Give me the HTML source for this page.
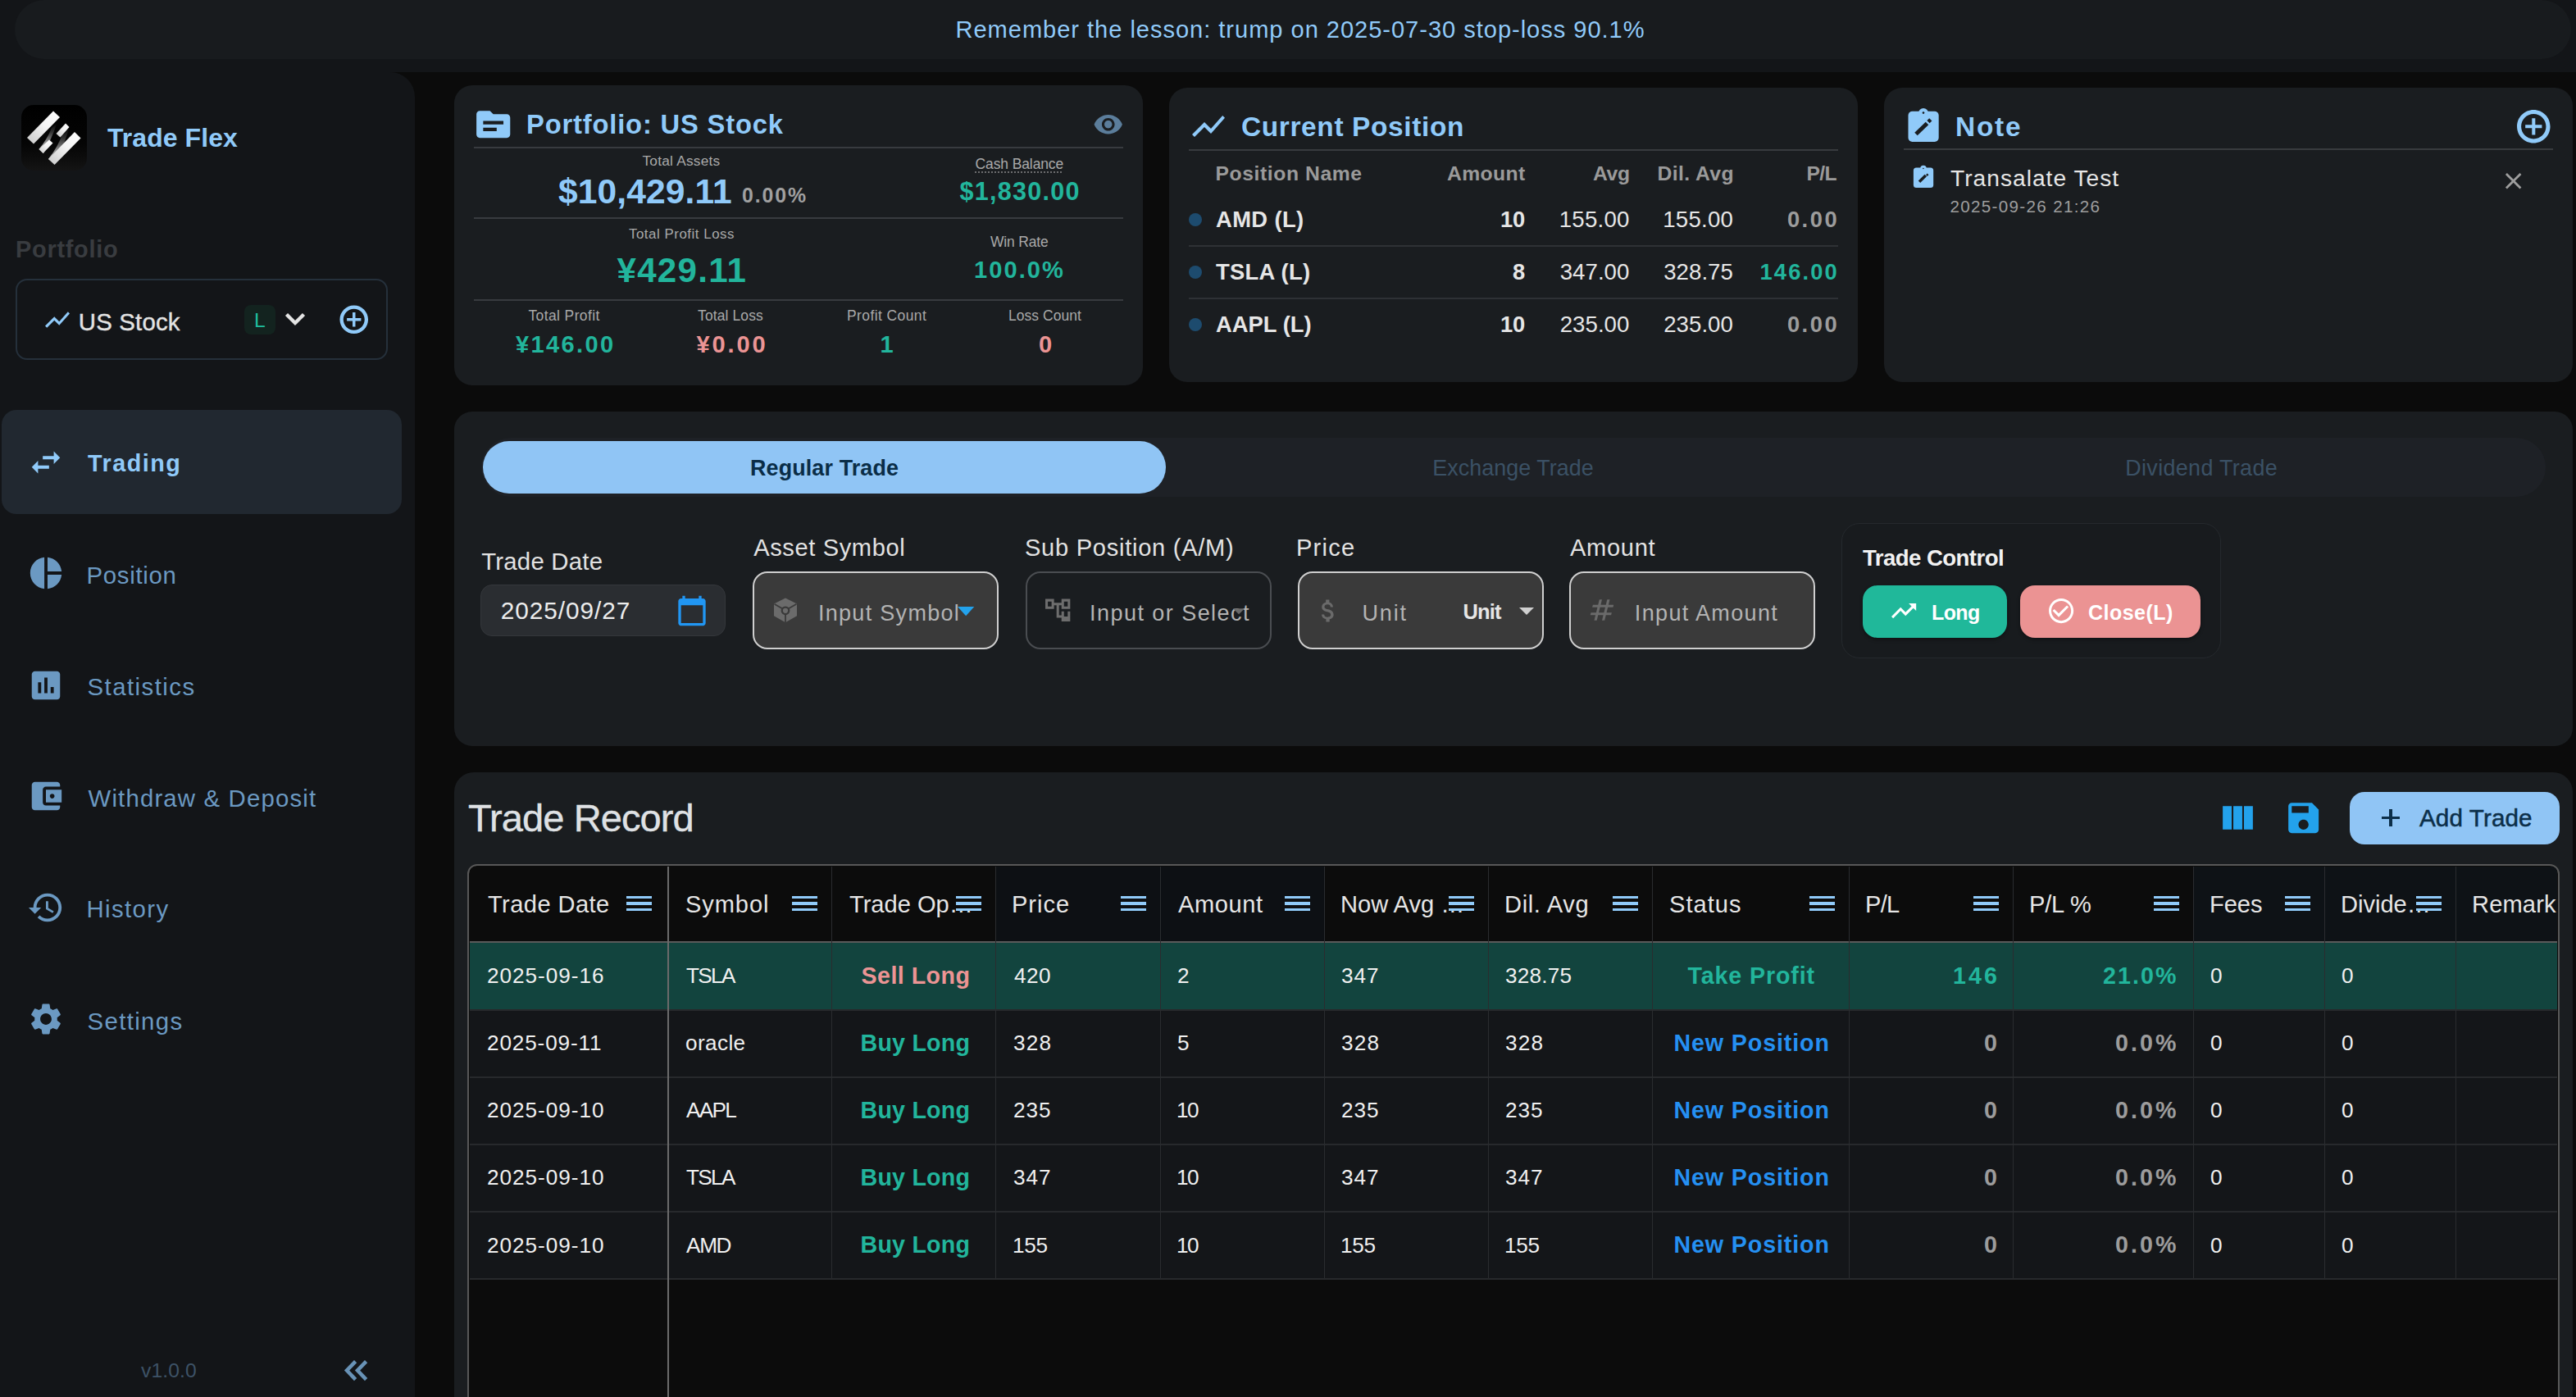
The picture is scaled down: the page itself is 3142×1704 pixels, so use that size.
<!DOCTYPE html><html><head><meta charset="utf-8"><style>html,body{margin:0;padding:0;}body{width:3142px;height:1704px;overflow:hidden;position:relative;background:#0b0b0b;font-family:"Liberation Sans",sans-serif;}.t{position:absolute;white-space:nowrap;}svg{display:block}</style></head><body>
<div style="position:absolute;left:0px;top:0px;width:3142px;height:88px;background:#131518;border-radius:0px;"></div>
<div style="position:absolute;left:0;top:88px;width:506px;height:1616px;background:#131518;border-top-right-radius:30px;"></div>
<div style="position:absolute;left:18px;top:0px;width:3118px;height:72px;background:#181b1e;border-radius:36px;"></div>
<div class="t" style="left:1165.50px;top:21.6px;font-size:29.07px;line-height:29.07px;text-align:left;color:#90caf9;font-weight:400;"><span id="banner" style="letter-spacing:0.97px;margin-right:-0.97px;">Remember the lesson: trump on 2025-07-30 stop-loss 90.1%</span></div>
<svg style="position:absolute;left:26px;top:128px;" width="80" height="80" viewBox="0 0 80 80"><defs><linearGradient id="lg1" x1="0" y1="0" x2="0" y2="1"><stop offset="0" stop-color="#000"/><stop offset="0.6" stop-color="#050505"/><stop offset="1" stop-color="#141414"/></linearGradient><linearGradient id="wg" x1="0" y1="1" x2="1" y2="0"><stop offset="0" stop-color="#c8c8c8"/><stop offset="0.55" stop-color="#f4f4f4"/><stop offset="1" stop-color="#ffffff"/></linearGradient><linearGradient id="gg" x1="0" y1="0" x2="0" y2="1"><stop offset="0" stop-color="#000"/><stop offset="0.3" stop-color="#333"/><stop offset="1" stop-color="#f0f0f0"/></linearGradient></defs><rect x="0" y="0" width="80" height="80" rx="15" fill="url(#lg1)"/><path d="M37 28 L43.5 22 C39 36 33 48 27 59 L21.5 54 C28 46 33 38 37 28 Z" fill="url(#gg)"/><path d="M51 33 L58.5 27.5 C54 44 47 58 41 72 L33 66 C41 56 47 45 51 33 Z" fill="url(#gg)"/><polygon points="7,40 15,47.5 47,15 39,7.5" fill="url(#wg)"/><polygon points="42.5,35 47.5,39.5 58.5,27 54,22.5" fill="url(#wg)"/><polygon points="33,66 40.5,73 72.5,40.5 65,33" fill="url(#wg)"/><polygon points="21.5,54 26.5,59 38.5,46.5 34,42.5" fill="url(#wg)"/></svg>
<div class="t" style="left:131.00px;top:152.1px;font-size:31.98px;line-height:31.98px;text-align:left;color:#90caf9;font-weight:700;"><span id="tradeflex" style="letter-spacing:0.07px;margin-right:-0.07px;">Trade Flex</span></div>
<div class="t" style="left:19.00px;top:289.7px;font-size:28.92px;line-height:28.92px;text-align:left;color:#393c40;font-weight:700;"><span id="pflabel" style="letter-spacing:0.73px;margin-right:-0.73px;">Portfolio</span></div>
<div style="position:absolute;left:19px;top:340px;width:450px;height:95px;border:2px solid #25303b;border-radius:14px;box-sizing:content-box;"></div>
<svg style="position:absolute;left:52px;top:371.5px;" width="36" height="36.0" viewBox="0 0 24 24" preserveAspectRatio="none"><path fill="#90caf9" d="M3.5 18.49l6-6.01 4 4L22 6.92l-1.41-1.41-7.09 7.97-4-4L2 16.99z"/></svg>
<div class="t" style="left:95.80px;top:377.6px;font-size:29.36px;line-height:29.36px;text-align:left;color:#e3e3e3;font-weight:400;-webkit-text-stroke:0.4px #e3e3e3;"><span id="usstock" style="letter-spacing:0.19px;margin-right:-0.19px;">US Stock</span></div>
<div style="position:absolute;left:298px;top:372px;width:38px;height:36px;background:#13231f;border-radius:8px;"></div>
<div class="t" style="left:-1183.13px;width:3000px;top:379.2px;font-size:24.71px;line-height:24.71px;text-align:center;color:#1fbf9f;font-weight:400;"><span id="badgeL" style="">L</span></div>
<svg style="position:absolute;left:345px;top:378px;" width="30" height="24" viewBox="0 0 30 24"><polyline points="4.5,5.5 15,16 25.5,5.5" fill="none" stroke="#e3e3e3" stroke-width="4.4"/></svg>
<svg style="position:absolute;left:411.2px;top:369.4px;" width="41.5" height="41.5" viewBox="0 0 24 24" preserveAspectRatio="none"><path fill="#90caf9" d="M13 7h-2v4H7v2h4v4h2v-4h4v-2h-4V7zM12 2C6.48 2 2 6.48 2 12s4.48 10 10 10 10-4.48 10-10S17.52 2 12 2zm0 17.5c-4.14 0-7.5-3.36-7.5-7.5S7.86 4.5 12 4.5s7.5 3.36 7.5 7.5-3.36 7.5-7.5 7.5z"/></svg>
<div style="position:absolute;left:2px;top:500px;width:488px;height:127px;background:#212830;border-radius:18px;"></div>
<svg style="position:absolute;left:33px;top:541px;" width="46" height="46" viewBox="0 0 24 24" preserveAspectRatio="none"><path fill="#90caf9" d="M6.99 11L3 15l3.99 4v-3H14v-2H6.99v-3zM21 9l-3.99-4v3H10v2h7.01v3L21 9z"/></svg>
<div class="t" style="left:107.00px;top:550.8px;font-size:28.78px;line-height:28.78px;text-align:left;color:#90caf9;font-weight:700;"><span id="nav_trading" style="letter-spacing:1.51px;margin-right:-1.51px;">Trading</span></div>
<svg style="position:absolute;left:33px;top:676.4px;" width="46" height="46.0" viewBox="0 0 24 24" preserveAspectRatio="none"><path fill="#6b99c2" d="M11 2v20c-5.07-.5-9-4.79-9-10s3.93-9.5 9-10zm2.03 0v8.99H22c-.47-4.74-4.24-8.52-8.97-8.99zm0 11.01V22c4.74-.47 8.5-4.25 8.97-8.99h-8.97z"/></svg>
<div class="t" style="left:105.50px;top:686.7px;font-size:29.36px;line-height:29.36px;text-align:left;color:#6b99c2;font-weight:400;"><span id="nav0" style="letter-spacing:0.70px;margin-right:-0.70px;">Position</span></div>
<svg style="position:absolute;left:33px;top:812.5px;" width="46" height="46.0" viewBox="0 0 24 24" preserveAspectRatio="none"><path fill="#6b99c2" d="M19 3H5c-1.1 0-2 .9-2 2v14c0 1.1.9 2 2 2h14c1.1 0 2-.9 2-2V5c0-1.1-.9-2-2-2zM9 17H7v-7h2v7zm4 0h-2V7h2v10zm4 0h-2v-4h2v4z"/></svg>
<div class="t" style="left:106.50px;top:822.8px;font-size:29.36px;line-height:29.36px;text-align:left;color:#6b99c2;font-weight:400;"><span id="nav1" style="letter-spacing:1.47px;margin-right:-1.47px;">Statistics</span></div>
<svg style="position:absolute;left:33px;top:948.4px;" width="46" height="46.0" viewBox="0 0 24 24" preserveAspectRatio="none"><path fill="#6b99c2" d="M21 18v1c0 1.1-.9 2-2 2H5c-1.11 0-2-.9-2-2V5c0-1.1.89-2 2-2h14c1.1 0 2 .9 2 2v1h-9c-1.11 0-2 .9-2 2v8c0 1.1.89 2 2 2h9zm-9-2h10V8H12v8zm4-2.5c-.83 0-1.5-.67-1.5-1.5s.67-1.5 1.5-1.5 1.5.67 1.5 1.5-.67 1.5-1.5 1.5z"/></svg>
<div class="t" style="left:107.50px;top:958.7px;font-size:29.36px;line-height:29.36px;text-align:left;color:#6b99c2;font-weight:400;"><span id="nav2" style="letter-spacing:1.17px;margin-right:-1.17px;">Withdraw &amp; Deposit</span></div>
<svg style="position:absolute;left:33px;top:1084px;" width="46" height="46" viewBox="0 0 24 24" preserveAspectRatio="none"><path fill="#6b99c2" d="M13 3c-4.97 0-9 4.03-9 9H1l3.89 3.89.07.14L9 12H6c0-3.87 3.13-7 7-7s7 3.13 7 7-3.13 7-7 7c-1.93 0-3.68-.79-4.94-2.06l-1.42 1.42C8.27 19.99 10.51 21 13 21c4.97 0 9-4.03 9-9s-4.03-9-9-9zm-1 5v5l4.28 2.54.72-1.21-3.5-2.08V8H12z"/></svg>
<div class="t" style="left:105.50px;top:1094.3px;font-size:29.36px;line-height:29.36px;text-align:left;color:#6b99c2;font-weight:400;"><span id="nav3" style="letter-spacing:1.39px;margin-right:-1.39px;">History</span></div>
<svg style="position:absolute;left:33px;top:1220.3px;" width="46" height="46.0" viewBox="0 0 24 24" preserveAspectRatio="none"><path fill="#6b99c2" d="M19.14 12.94c.04-.3.06-.61.06-.94 0-.32-.02-.64-.07-.94l2.03-1.58c.18-.14.23-.41.12-.61l-1.92-3.32c-.12-.22-.37-.29-.59-.22l-2.39.96c-.5-.38-1.03-.7-1.62-.94l-.36-2.54c-.04-.24-.24-.41-.48-.41h-3.84c-.24 0-.43.17-.47.41l-.36 2.54c-.59.24-1.13.57-1.62.94l-2.39-.96c-.22-.08-.47 0-.59.22L2.74 8.87c-.12.21-.08.47.12.61l2.03 1.58c-.05.3-.09.63-.09.94s.02.64.07.94l-2.03 1.58c-.18.14-.23.41-.12.61l1.92 3.32c.12.22.37.29.59.22l2.39-.96c.5.38 1.03.7 1.62.94l.36 2.54c.05.24.24.41.48.41h3.84c.24 0 .44-.17.47-.41l.36-2.54c.59-.24 1.130-.56 1.62-.94l2.39.96c.22.08.47 0 .59-.22l1.92-3.32c.12-.22.07-.47-.12-.61l-2.01-1.58zM12 15.6c-1.98 0-3.6-1.62-3.6-3.6s1.62-3.6 3.6-3.6 3.6 1.62 3.6 3.6-1.62 3.6-3.6 3.6z"/></svg>
<div class="t" style="left:106.50px;top:1230.6px;font-size:29.36px;line-height:29.36px;text-align:left;color:#6b99c2;font-weight:400;"><span id="nav4" style="letter-spacing:1.37px;margin-right:-1.37px;">Settings</span></div>
<div class="t" style="left:172.00px;top:1660.2px;font-size:24.71px;line-height:24.71px;text-align:left;color:#3d5266;font-weight:400;"><span id="ver" style="letter-spacing:0.09px;margin-right:-0.09px;">v1.0.0</span></div>
<svg style="position:absolute;left:405px;top:1645px;" width="60" height="55" viewBox="0 0 60 55"><polyline points="28.6,15.6 18,26.6 28.6,37.6" fill="none" stroke="#6892b6" stroke-width="4.5"/><polyline points="41.6,15.6 31,26.6 41.6,37.6" fill="none" stroke="#6892b6" stroke-width="4.5"/></svg>
<div style="position:absolute;left:554px;top:104px;width:840px;height:366px;background:#1a1d20;border-radius:22px;"></div>
<div style="position:absolute;left:1426px;top:107px;width:840px;height:359px;background:#1a1d20;border-radius:22px;"></div>
<div style="position:absolute;left:2298px;top:107px;width:840px;height:359px;background:#1a1d20;border-radius:22px;"></div>
<svg style="position:absolute;left:577.3px;top:126.6px;" width="49.40000000000009" height="49.400000000000006" viewBox="0 0 24 24" preserveAspectRatio="none"><path fill="#90caf9" d="M20 6h-8l-2-2H4c-1.1 0-1.99.9-1.99 2L2 18c0 1.1.9 2 2 2h16c1.1 0 2-.9 2-2V8c0-1.1-.9-2-2-2zm-6 10H6v-2h8v2zm4-4H6v-2h12v2z"/></svg>
<div class="t" style="left:642.00px;top:135.5px;font-size:32.70px;line-height:32.70px;text-align:left;color:#90caf9;font-weight:700;"><span id="pf_title" style="letter-spacing:0.84px;margin-right:-0.84px;">Portfolio: US Stock</span></div>
<svg style="position:absolute;left:1333px;top:133px;" width="37.5" height="37.5" viewBox="0 0 24 24" preserveAspectRatio="none"><path fill="#5b7d9b" d="M12 4.5C7 4.5 2.73 7.61 1 12c1.73 4.39 6 7.5 11 7.5s9.27-3.11 11-7.5c-1.73-4.39-6-7.5-11-7.5zM12 17c-2.76 0-5-2.24-5-5s2.24-5 5-5 5 2.24 5 5-2.24 5-5 5zm0-8c-1.66 0-3 1.34-3 3s1.34 3 3 3 3-1.34 3-3-1.34-3-3-3z"/></svg>
<div style="position:absolute;left:578px;top:179px;width:792px;height:2px;background:#383b3f;border-radius:0px;"></div>
<div style="position:absolute;left:578px;top:265px;width:792px;height:2px;background:#383b3f;border-radius:0px;"></div>
<div style="position:absolute;left:578px;top:365px;width:792px;height:2px;background:#383b3f;border-radius:0px;"></div>
<div class="t" style="left:-669.18px;width:3000px;top:187.5px;font-size:17.30px;line-height:17.30px;text-align:center;color:#a9a9a9;font-weight:400;"><span id="ta" style="letter-spacing:0.23px;margin-right:-0.23px;">Total Assets</span></div>
<div class="t" style="left:681.00px;top:212.2px;font-size:42.59px;line-height:42.59px;text-align:left;color:#90caf9;font-weight:700;"><span id="ta_v" style="letter-spacing:0.10px;margin-right:-0.10px;">$10,429.11</span></div>
<div class="t" style="left:905.00px;top:227.1px;font-size:24.85px;line-height:24.85px;text-align:left;color:#a0a0a0;font-weight:700;"><span id="ta_p" style="letter-spacing:1.91px;margin-right:-1.91px;">0.00%</span></div>
<div class="t" style="left:-256.65px;width:3000px;top:192.3px;font-size:17.44px;line-height:17.44px;text-align:center;color:#a9a9a9;font-weight:400;text-decoration:underline dotted #888;text-underline-offset:3px;"><span id="cb" style="letter-spacing:-0.08px;margin-right:0.08px;">Cash Balance</span></div>
<div class="t" style="left:-256.51px;width:3000px;top:218.4px;font-size:30.52px;line-height:30.52px;text-align:center;color:#22b59c;font-weight:700;"><span id="cb_v" style="letter-spacing:1.28px;margin-right:-1.28px;">$1,830.00</span></div>
<div class="t" style="left:-668.79px;width:3000px;top:277.8px;font-size:16.86px;line-height:16.86px;text-align:center;color:#a9a9a9;font-weight:400;"><span id="tpl" style="letter-spacing:0.53px;margin-right:-0.53px;">Total Profit Loss</span></div>
<div class="t" style="left:-668.78px;width:3000px;top:309.1px;font-size:42.15px;line-height:42.15px;text-align:center;color:#22b59c;font-weight:700;"><span id="tpl_v" style="letter-spacing:1.24px;margin-right:-1.24px;">&#165;429.11</span></div>
<div class="t" style="left:-256.65px;width:3000px;top:287.3px;font-size:17.44px;line-height:17.44px;text-align:center;color:#a9a9a9;font-weight:400;"><span id="wr" style="letter-spacing:-0.14px;margin-right:0.14px;">Win Rate</span></div>
<div class="t" style="left:-257.58px;width:3000px;top:314.6px;font-size:29.07px;line-height:29.07px;text-align:center;color:#22b59c;font-weight:700;"><span id="wr_v" style="letter-spacing:2.06px;margin-right:-2.06px;">100.0%</span></div>
<div class="t" style="left:-812.08px;width:3000px;top:377.3px;font-size:17.44px;line-height:17.44px;text-align:center;color:#a9a9a9;font-weight:400;"><span id="bl0" style="letter-spacing:0.41px;margin-right:-0.41px;">Total Profit</span></div>
<div class="t" style="left:-811.42px;width:3000px;top:405.6px;font-size:29.07px;line-height:29.07px;text-align:center;color:#22b59c;font-weight:700;"><span id="bv0" style="letter-spacing:2.35px;margin-right:-2.35px;">&#165;146.00</span></div>
<div class="t" style="left:-609.14px;width:3000px;top:377.3px;font-size:17.44px;line-height:17.44px;text-align:center;color:#a9a9a9;font-weight:400;"><span id="bl1" style="letter-spacing:0.13px;margin-right:-0.13px;">Total Loss</span></div>
<div class="t" style="left:-608.42px;width:3000px;top:405.6px;font-size:29.07px;line-height:29.07px;text-align:center;color:#ec9494;font-weight:700;"><span id="bv1" style="letter-spacing:2.86px;margin-right:-2.86px;">&#165;0.00</span></div>
<div class="t" style="left:-418.58px;width:3000px;top:377.3px;font-size:17.44px;line-height:17.44px;text-align:center;color:#a9a9a9;font-weight:400;"><span id="bl2" style="letter-spacing:0.43px;margin-right:-0.43px;">Profit Count</span></div>
<div class="t" style="left:-418.42px;width:3000px;top:405.6px;font-size:29.07px;line-height:29.07px;text-align:center;color:#22b59c;font-weight:700;"><span id="bv2" style="">1</span></div>
<div class="t" style="left:-225.58px;width:3000px;top:377.3px;font-size:17.44px;line-height:17.44px;text-align:center;color:#a9a9a9;font-weight:400;"><span id="bl3" style="letter-spacing:0.07px;margin-right:-0.07px;">Loss Count</span></div>
<div class="t" style="left:-224.92px;width:3000px;top:405.6px;font-size:29.07px;line-height:29.07px;text-align:center;color:#ec9494;font-weight:700;"><span id="bv3" style="">0</span></div>
<svg style="position:absolute;left:1450px;top:130px;" width="48" height="48" viewBox="0 0 24 24" preserveAspectRatio="none"><path fill="#90caf9" d="M3.5 18.49l6-6.01 4 4L22 6.92l-1.41-1.41-7.09 7.97-4-4L2 16.99z"/></svg>
<div class="t" style="left:1514.00px;top:138.4px;font-size:33.43px;line-height:33.43px;text-align:left;color:#90caf9;font-weight:700;"><span id="cp_title" style="letter-spacing:0.64px;margin-right:-0.64px;">Current Position</span></div>
<div style="position:absolute;left:1450px;top:182px;width:792px;height:2px;background:#383b3f;border-radius:0px;"></div>
<div class="t" style="left:1482.50px;top:200.2px;font-size:24.71px;line-height:24.71px;text-align:left;color:#9a9a9a;font-weight:700;"><span id="cph0" style="letter-spacing:0.58px;margin-right:-0.58px;">Position Name</span></div>
<div class="t" style="left:-1139.77px;width:3000px;top:200.2px;font-size:24.71px;line-height:24.71px;text-align:right;color:#9a9a9a;font-weight:700;"><span id="cph1" style="letter-spacing:0.39px;margin-right:-0.39px;">Amount</span></div>
<div class="t" style="left:-1011.91px;width:3000px;top:200.2px;font-size:24.71px;line-height:24.71px;text-align:right;color:#9a9a9a;font-weight:700;"><span id="cph2" style="letter-spacing:-0.33px;margin-right:0.33px;">Avg</span></div>
<div class="t" style="left:-885.41px;width:3000px;top:200.2px;font-size:24.71px;line-height:24.71px;text-align:right;color:#9a9a9a;font-weight:700;"><span id="cph3" style="letter-spacing:0.43px;margin-right:-0.43px;">Dil. Avg</span></div>
<div class="t" style="left:-759.41px;width:3000px;top:200.2px;font-size:24.71px;line-height:24.71px;text-align:right;color:#9a9a9a;font-weight:700;"><span id="cph4" style="letter-spacing:-0.67px;margin-right:0.67px;">P/L</span></div>
<div style="position:absolute;left:1450px;top:259.5px;width:16px;height:16px;border-radius:8px;background:#1d4b6e"></div>
<div class="t" style="left:1483.00px;top:254.0px;font-size:27.33px;line-height:27.33px;text-align:left;color:#e6e6e6;font-weight:700;"><span id="cpn0" style="letter-spacing:0.40px;margin-right:-0.40px;">AMD (L)</span></div>
<div class="t" style="left:-1139.80px;width:3000px;top:254.0px;font-size:27.33px;line-height:27.33px;text-align:right;color:#e6e6e6;font-weight:700;"><span id="cpa0" style="letter-spacing:-0.20px;margin-right:0.20px;">10</span></div>
<div class="t" style="left:-1012.64px;width:3000px;top:253.8px;font-size:27.62px;line-height:27.62px;text-align:right;color:#e6e6e6;font-weight:400;"><span id="cpv0" style="letter-spacing:0.24px;margin-right:-0.24px;">155.00</span></div>
<div class="t" style="left:-886.14px;width:3000px;top:253.8px;font-size:27.62px;line-height:27.62px;text-align:right;color:#e6e6e6;font-weight:400;"><span id="cpd0" style="letter-spacing:0.24px;margin-right:-0.24px;">155.00</span></div>
<div class="t" style="left:-759.30px;width:3000px;top:254.0px;font-size:27.33px;line-height:27.33px;text-align:right;color:#9c9c9c;font-weight:700;"><span id="cpp0" style="letter-spacing:2.54px;margin-right:-2.54px;">0.00</span></div>
<div style="position:absolute;left:1450px;top:323.8px;width:16px;height:16px;border-radius:8px;background:#1d4b6e"></div>
<div class="t" style="left:1483.00px;top:318.3px;font-size:27.33px;line-height:27.33px;text-align:left;color:#e6e6e6;font-weight:700;"><span id="cpn1" style="letter-spacing:0.32px;margin-right:-0.32px;">TSLA (L)</span></div>
<div class="t" style="left:-1139.80px;width:3000px;top:318.3px;font-size:27.33px;line-height:27.33px;text-align:right;color:#e6e6e6;font-weight:700;"><span id="cpa1" style="">8</span></div>
<div class="t" style="left:-1012.64px;width:3000px;top:318.1px;font-size:27.62px;line-height:27.62px;text-align:right;color:#e6e6e6;font-weight:400;"><span id="cpv1" style="letter-spacing:0.04px;margin-right:-0.04px;">347.00</span></div>
<div class="t" style="left:-886.14px;width:3000px;top:318.1px;font-size:27.62px;line-height:27.62px;text-align:right;color:#e6e6e6;font-weight:400;"><span id="cpd1" style="letter-spacing:0.04px;margin-right:-0.04px;">328.75</span></div>
<div class="t" style="left:-759.30px;width:3000px;top:318.3px;font-size:27.33px;line-height:27.33px;text-align:right;color:#22b59c;font-weight:700;"><span id="cpp1" style="letter-spacing:2.12px;margin-right:-2.12px;">146.00</span></div>
<div style="position:absolute;left:1450px;top:387.8px;width:16px;height:16px;border-radius:8px;background:#1d4b6e"></div>
<div class="t" style="left:1483.00px;top:382.3px;font-size:27.33px;line-height:27.33px;text-align:left;color:#e6e6e6;font-weight:700;"><span id="cpn2" style="letter-spacing:0.03px;margin-right:-0.03px;">AAPL (L)</span></div>
<div class="t" style="left:-1139.80px;width:3000px;top:382.3px;font-size:27.33px;line-height:27.33px;text-align:right;color:#e6e6e6;font-weight:700;"><span id="cpa2" style="letter-spacing:-0.20px;margin-right:0.20px;">10</span></div>
<div class="t" style="left:-1012.64px;width:3000px;top:382.1px;font-size:27.62px;line-height:27.62px;text-align:right;color:#e6e6e6;font-weight:400;"><span id="cpv2" style="letter-spacing:0.04px;margin-right:-0.04px;">235.00</span></div>
<div class="t" style="left:-886.14px;width:3000px;top:382.1px;font-size:27.62px;line-height:27.62px;text-align:right;color:#e6e6e6;font-weight:400;"><span id="cpd2" style="letter-spacing:0.04px;margin-right:-0.04px;">235.00</span></div>
<div class="t" style="left:-759.30px;width:3000px;top:382.3px;font-size:27.33px;line-height:27.33px;text-align:right;color:#9c9c9c;font-weight:700;"><span id="cpp2" style="letter-spacing:2.54px;margin-right:-2.54px;">0.00</span></div>
<div style="position:absolute;left:1450px;top:299px;width:792px;height:2px;background:#2e3135;border-radius:0px;"></div>
<div style="position:absolute;left:1450px;top:363px;width:792px;height:2px;background:#2e3135;border-radius:0px;"></div>
<svg style="position:absolute;left:2322px;top:128px;" width="48" height="48" viewBox="0 0 48 48"><rect x="5.5" y="7.8" width="37.2" height="37.2" rx="5" fill="#90caf9"/><circle cx="24" cy="10" r="6" fill="#90caf9"/><circle cx="24" cy="9.6" r="1.3" fill="#1a1d20"/><line x1="15" y1="35.5" x2="28.5" y2="22.5" stroke="#1a1d20" stroke-width="5"/><line x1="29.8" y1="17.6" x2="33" y2="20.8" stroke="#1a1d20" stroke-width="4"/></svg>
<div class="t" style="left:2385.00px;top:138.2px;font-size:33.43px;line-height:33.43px;text-align:left;color:#90caf9;font-weight:700;"><span id="note_title" style="letter-spacing:1.77px;margin-right:-1.77px;">Note</span></div>
<svg style="position:absolute;left:3065.75px;top:130px;" width="48.59999999999991" height="48.599999999999994" viewBox="0 0 24 24" preserveAspectRatio="none"><path fill="#90caf9" d="M13 7h-2v4H7v2h4v4h2v-4h4v-2h-4V7zM12 2C6.48 2 2 6.48 2 12s4.48 10 10 10 10-4.48 10-10S17.52 2 12 2zm0 17.5c-4.14 0-7.5-3.36-7.5-7.5S7.86 4.5 12 4.5s7.5 3.36 7.5 7.5-3.36 7.5-7.5 7.5z"/></svg>
<div style="position:absolute;left:2322px;top:181px;width:792px;height:2px;background:#383b3f;border-radius:0px;"></div>
<svg style="position:absolute;left:2330px;top:200px;" width="32" height="32" viewBox="0 0 32 32"><rect x="3.9" y="4.4" width="24.3" height="24.7" rx="3.5" fill="#90caf9"/><circle cx="16" cy="5.6" r="3.8" fill="#90caf9"/><circle cx="15.9" cy="5.5" r="0.8" fill="#1a1d20"/><line x1="11" y1="21.8" x2="18.8" y2="14" stroke="#1a1d20" stroke-width="3.4"/><line x1="19.9" y1="12.4" x2="21.6" y2="14.1" stroke="#1a1d20" stroke-width="2.4"/></svg>
<div class="t" style="left:2379.00px;top:203.0px;font-size:28.20px;line-height:28.20px;text-align:left;color:#e6e6e6;font-weight:400;"><span id="note1" style="letter-spacing:1.00px;margin-right:-1.00px;">Transalate Test</span></div>
<div class="t" style="left:2378.40px;top:241.5px;font-size:20.64px;line-height:20.64px;text-align:left;color:#9e9e9e;font-weight:400;"><span id="note1d" style="letter-spacing:1.32px;margin-right:-1.32px;">2025-09-26 21:26</span></div>
<svg style="position:absolute;left:3049.3px;top:204px;" width="33.399999999999636" height="33.400000000000006" viewBox="0 0 24 24" preserveAspectRatio="none"><path fill="#9e9e9e" d="M19 6.41L17.59 5 12 10.59 6.41 5 5 6.41 10.59 12 5 17.59 6.41 19 12 13.41 17.59 19 19 17.59 13.41 12z"/></svg>
<div style="position:absolute;left:554px;top:502px;width:2584px;height:408px;background:#1a1d20;border-radius:22px;"></div>
<div style="position:absolute;left:587px;top:534px;width:2518px;height:72px;background:#1e2126;border-radius:36px;"></div>
<div style="position:absolute;left:589px;top:538px;width:833px;height:64px;background:#90c5f5;border-radius:32px;"></div>
<div class="t" style="left:-494.53px;width:3000px;top:558.4px;font-size:26.89px;line-height:26.89px;text-align:center;color:#0a2d47;font-weight:700;"><span id="tab0" style="letter-spacing:0.14px;margin-right:-0.14px;">Regular Trade</span></div>
<div class="t" style="left:345.47px;width:3000px;top:558.4px;font-size:26.89px;line-height:26.89px;text-align:center;color:#3b5165;font-weight:400;"><span id="tab1" style="letter-spacing:0.06px;margin-right:-0.06px;">Exchange Trade</span></div>
<div class="t" style="left:1184.97px;width:3000px;top:558.4px;font-size:26.89px;line-height:26.89px;text-align:center;color:#3b5165;font-weight:400;"><span id="tab2" style="letter-spacing:0.36px;margin-right:-0.36px;">Dividend Trade</span></div>
<div class="t" style="left:587.20px;top:670.3px;font-size:29.36px;line-height:29.36px;text-align:left;color:#e2e2e2;font-weight:400;"><span id="l_date" style="letter-spacing:0.23px;margin-right:-0.23px;">Trade Date</span></div>
<div style="position:absolute;left:586px;top:713px;width:297px;height:61px;background:#2a2d31;border:1.5px solid #34373b;border-radius:14px"></div>
<div class="t" style="left:610.70px;top:730.0px;font-size:29.80px;line-height:29.80px;text-align:left;color:#ececec;font-weight:400;"><span id="v_date" style="letter-spacing:0.94px;margin-right:-0.94px;">2025/09/27</span></div>
<svg style="position:absolute;left:824px;top:725px;" width="40" height="40" viewBox="0 0 24 24" preserveAspectRatio="none"><path fill="#2196f3" d="M20 3h-1V1h-2v2H7V1H5v2H4c-1.1 0-2 .9-2 2v16c0 1.1.9 2 2 2h16c1.1 0 2-.9 2-2V5c0-1.1-.9-2-2-2zm0 18H4V8h16v13z"/></svg>
<div class="t" style="left:919.20px;top:654.4px;font-size:29.07px;line-height:29.07px;text-align:left;color:#e2e2e2;font-weight:400;"><span id="lab0" style="letter-spacing:0.62px;margin-right:-0.62px;">Asset Symbol</span></div>
<div class="t" style="left:1250.00px;top:654.4px;font-size:29.07px;line-height:29.07px;text-align:left;color:#e2e2e2;font-weight:400;"><span id="lab1" style="letter-spacing:0.73px;margin-right:-0.73px;">Sub Position (A/M)</span></div>
<div class="t" style="left:1581.00px;top:654.4px;font-size:29.07px;line-height:29.07px;text-align:left;color:#e2e2e2;font-weight:400;"><span id="lab2" style="letter-spacing:1.24px;margin-right:-1.24px;">Price</span></div>
<div class="t" style="left:1915.00px;top:654.4px;font-size:29.07px;line-height:29.07px;text-align:left;color:#e2e2e2;font-weight:400;"><span id="lab3" style="letter-spacing:0.68px;margin-right:-0.68px;">Amount</span></div>
<div style="position:absolute;left:918px;top:697px;width:296px;height:91px;background:#3a3a3a;border:2px solid #cfcfcf;border-radius:18px"></div>
<div style="position:absolute;left:1251px;top:697px;width:296px;height:91px;background:#1a1d20;border:2px solid #4a4d51;border-radius:18px"></div>
<div style="position:absolute;left:1583px;top:697px;width:296px;height:91px;background:#3a3a3a;border:2px solid #cfcfcf;border-radius:18px"></div>
<div style="position:absolute;left:1914px;top:697px;width:296px;height:91px;background:#3a3a3a;border:2px solid #cfcfcf;border-radius:18px"></div>
<svg style="position:absolute;left:941px;top:726px;" width="36" height="36" viewBox="0 0 36 36"><path d="M17 3.4 L31 10.6 L31 25.2 L17 33.2 L3 25.2 L3 10.6 Z" fill="#6b6b6b"/><path d="M3.5 10.8 L17 18.5 L30.5 10.8 M17 18.5 L17 33.5" stroke="#3a3a3a" stroke-width="1.8" fill="none"/><circle cx="17" cy="18.8" r="5.4" fill="#3a3a3a"/><circle cx="17" cy="18.8" r="3.1" fill="#6b6b6b"/></svg>
<div class="t" style="left:997.90px;top:735.3px;font-size:27.03px;line-height:27.03px;text-align:left;color:#b3b3b3;font-weight:400;"><span id="ph0" style="letter-spacing:1.30px;margin-right:-1.30px;">Input Symbol</span></div>
<svg style="position:absolute;left:1166px;top:738px;" width="24" height="15" viewBox="0 0 24 15"><polygon points="2,2 22.3,2 12.15,13.2" fill="#23a2ec"/></svg>
<svg style="position:absolute;left:1271.8px;top:726.3px;" width="36.40000000000009" height="36.700000000000045" viewBox="0 0 24 24" preserveAspectRatio="none"><path fill="#6d6d6d" d="M22 11V3h-7v3H9V3H2v8h7V8h2v10h4v3h7v-8h-7v3h-2V8h2v3h7zM7 9H4V5h3v4zm10 4h3v4h-3v-4zm0-8h3v4h-3V5z"/></svg>
<div class="t" style="left:1329.00px;top:735.3px;font-size:27.03px;line-height:27.03px;text-align:left;color:#b3b3b3;font-weight:400;"><span id="ph1" style="letter-spacing:1.45px;margin-right:-1.45px;">Input or Select</span></div>
<svg style="position:absolute;left:1494px;top:728px;" width="34" height="34" viewBox="0 0 24 24" preserveAspectRatio="none"><path fill="#6a6a6a" d="M7 10l5 5 5-5z"/></svg>
<svg style="position:absolute;left:1603px;top:727px;" width="34" height="36" viewBox="0 0 24 24" preserveAspectRatio="none"><path fill="#6a6a6a" d="M11.8 10.9c-2.27-.59-3-1.2-3-2.15 0-1.09 1.01-1.85 2.7-1.850 1.78 0 2.44.85 2.5 2.1h2.21c-.07-1.72-1.12-3.3-3.21-3.81V3h-3v2.16c-1.94.42-3.5 1.68-3.5 3.61 0 2.31 1.91 3.46 4.7 4.13 2.5.6 3 1.48 3 2.41 0 .69-.49 1.79-2.7 1.79-2.06 0-2.87-.92-2.98-2.1h-2.2c.12 2.19 1.76 3.42 3.86 3.86V21h3v-2.15c1.95-.37 3.5-1.5 3.5-3.55 0-2.84-2.43-3.81-4.7-4.4z"/></svg>
<div class="t" style="left:1661.50px;top:735.3px;font-size:27.03px;line-height:27.03px;text-align:left;color:#b3b3b3;font-weight:400;"><span id="ph2" style="letter-spacing:1.82px;margin-right:-1.82px;">Unit</span></div>
<div class="t" style="left:1784.50px;top:734.0px;font-size:25.44px;line-height:25.44px;text-align:left;color:#e6e6e6;font-weight:700;"><span id="unit" style="letter-spacing:-0.86px;margin-right:0.86px;">Unit</span></div>
<svg style="position:absolute;left:1850px;top:738px;" width="24" height="15" viewBox="0 0 24 15"><polygon points="3,3 21,3 12,12" fill="#cfcfcf"/></svg>
<svg style="position:absolute;left:1935px;top:725px;" width="38" height="38" viewBox="0 0 24 24" preserveAspectRatio="none"><path fill="#6a6a6a" d="M20.5 10L21 8h-4l1-4h-2l-1 4h-4l1-4h-2L9 8H5l-.5 2h4l-1 4h-4L3 16h4l-1 4h2l1-4h4l-1 4h2l1-4h4l.5-2h-4l1-4h4zm-7 4h-4l1-4h4l-1 4z"/></svg>
<div class="t" style="left:1993.80px;top:735.3px;font-size:27.03px;line-height:27.03px;text-align:left;color:#b3b3b3;font-weight:400;"><span id="ph3" style="letter-spacing:1.35px;margin-right:-1.35px;">Input Amount</span></div>
<div style="position:absolute;left:2246px;top:638px;width:461px;height:163px;background:#181b1e;border:1.5px solid #25292d;border-radius:22px"></div>
<div class="t" style="left:2272.00px;top:666.8px;font-size:27.62px;line-height:27.62px;text-align:left;color:#f2f2f2;font-weight:700;"><span id="tc" style="letter-spacing:-0.57px;margin-right:0.57px;">Trade Control</span></div>
<div style="position:absolute;left:2272px;top:714px;width:176px;height:64px;background:#20b89a;border-radius:18px;box-shadow:0 2px 4px rgba(0,0,0,0.4);"></div>
<svg style="position:absolute;left:2304px;top:727.3px;" width="36.19999999999982" height="36.200000000000045" viewBox="0 0 24 24" preserveAspectRatio="none"><path fill="#ffffff" d="M16 6l2.29 2.29-4.88 4.88-4-4L2 16.59 3.41 18l6-6 4 4 6.3-6.29L22 12V6z"/></svg>
<div class="t" style="left:2356.00px;top:734.6px;font-size:25.00px;line-height:25.00px;text-align:left;color:#ffffff;font-weight:700;"><span id="long" style="letter-spacing:-0.60px;margin-right:0.60px;">Long</span></div>
<div style="position:absolute;left:2464px;top:714px;width:220px;height:64px;background:#eb9393;border-radius:18px;box-shadow:0 2px 4px rgba(0,0,0,0.4);"></div>
<svg style="position:absolute;left:2495.8px;top:727.4px;" width="36.19999999999982" height="36.200000000000045" viewBox="0 0 24 24" preserveAspectRatio="none"><path fill="#ffffff" d="M16.59 7.58L10 14.17l-3.59-3.58L5 12l5 5 8-8zM12 2C6.48 2 2 6.48 2 12s4.48 10 10 10 10-4.48 10-10S17.52 2 12 2zm0 18c-4.42 0-8-3.58-8-8s3.58-8 8-8 8 3.58 8 8-3.58 8-8 8z"/></svg>
<div class="t" style="left:2547.00px;top:734.6px;font-size:25.00px;line-height:25.00px;text-align:left;color:#ffffff;font-weight:700;"><span id="closel" style="letter-spacing:0.47px;margin-right:-0.47px;">Close(L)</span></div>
<div style="position:absolute;left:554px;top:942px;width:2584px;height:818px;background:#1a1d20;border-radius:24px;"></div>
<div class="t" style="left:571.00px;top:974.4px;font-size:47.09px;line-height:47.09px;text-align:left;color:#dfe1e4;font-weight:400;-webkit-text-stroke:0.4px #dfe1e4;"><span id="tr_title" style="letter-spacing:-0.94px;margin-right:0.94px;">Trade Record</span></div>
<svg style="position:absolute;left:2705.2px;top:972.7px;" width="49.0" height="49.0" viewBox="0 0 24 24" preserveAspectRatio="none"><path fill="#23a2ec" d="M14.67 5v14H9.33V5h5.34zm1 14H21V5h-5.33v14zm-7.34 0V5H3v14h5.33z"/></svg>
<svg style="position:absolute;left:2785px;top:972.8px;" width="49.30000000000018" height="49.30000000000007" viewBox="0 0 24 24" preserveAspectRatio="none"><path fill="#23a2ec" d="M17 3H5c-1.11 0-2 .9-2 2v14c0 1.1.89 2 2 2h14c1.1 0 2-.9 2-2V7l-4-4zm-5 16c-1.66 0-3-1.34-3-3s1.34-3 3-3 3 1.34 3 3-1.34 3-3 3zm3-10H5V5h10v4z"/></svg>
<div style="position:absolute;left:2866px;top:966px;width:256px;height:64px;background:#90c5f5;border-radius:18px;"></div>
<div style="position:absolute;left:2904.9px;top:995.7px;width:21.799999999999727px;height:3.699999999999932px;background:#0c2f49;border-radius:0px;"></div>
<div style="position:absolute;left:2913.95px;top:986.9px;width:3.700000000000273px;height:21.5px;background:#0c2f49;border-radius:0px;"></div>
<div class="t" style="left:2951.00px;top:983.3px;font-size:29.65px;line-height:29.65px;text-align:left;color:#0c2f49;font-weight:400;-webkit-text-stroke:0.5px #0c2f49;"><span id="addtrade" style="letter-spacing:0.10px;margin-right:-0.10px;">Add Trade</span></div>
<div style="position:absolute;left:570px;top:1054px;width:2548px;height:700px;border:2px solid #585858;border-radius:12px;background:#0c0c0c;overflow:hidden"><div style="position:absolute;left:-572px;top:-1056px;width:3142px;height:1704px">
<div style="position:absolute;left:573px;top:1057px;width:242px;height:91px;background:#0c0c0c;border-radius:0px;"></div>
<div style="position:absolute;left:815px;top:1057px;width:199px;height:91px;background:#0c0c0c;border-radius:0px;"></div>
<div style="position:absolute;left:1014px;top:1057px;width:200px;height:91px;background:#0c0c0c;border-radius:0px;"></div>
<div style="position:absolute;left:1214px;top:1057px;width:201px;height:91px;background:#0d1014;border-radius:0px;"></div>
<div style="position:absolute;left:1415px;top:1057px;width:200px;height:91px;background:#0d1014;border-radius:0px;"></div>
<div style="position:absolute;left:1615px;top:1057px;width:200px;height:91px;background:#0c0c0c;border-radius:0px;"></div>
<div style="position:absolute;left:1815px;top:1057px;width:200px;height:91px;background:#0c0c0c;border-radius:0px;"></div>
<div style="position:absolute;left:2015px;top:1057px;width:240px;height:91px;background:#0c0c0c;border-radius:0px;"></div>
<div style="position:absolute;left:2255px;top:1057px;width:200px;height:91px;background:#0c0c0c;border-radius:0px;"></div>
<div style="position:absolute;left:2455px;top:1057px;width:220px;height:91px;background:#0c0c0c;border-radius:0px;"></div>
<div style="position:absolute;left:2675px;top:1057px;width:160px;height:91px;background:#0e1216;border-radius:0px;"></div>
<div style="position:absolute;left:2835px;top:1057px;width:160px;height:91px;background:#0e1216;border-radius:0px;"></div>
<div style="position:absolute;left:2995px;top:1057px;width:124px;height:91px;background:#0e1216;border-radius:0px;"></div>
<div style="position:absolute;left:573px;top:1148px;width:2546px;height:2px;background:#5a5a5a;border-radius:0px;"></div>
<div style="position:absolute;left:573px;top:1150px;width:2546px;height:81px;background:#12443e;border-radius:0px;"></div>
<div style="position:absolute;left:573px;top:1232px;width:2546px;height:81px;background:#141619;border-radius:0px;"></div>
<div style="position:absolute;left:573px;top:1314px;width:2546px;height:81px;background:#141619;border-radius:0px;"></div>
<div style="position:absolute;left:573px;top:1396px;width:2546px;height:81px;background:#141619;border-radius:0px;"></div>
<div style="position:absolute;left:573px;top:1478px;width:2546px;height:81px;background:#141619;border-radius:0px;"></div>
<div style="position:absolute;left:573px;top:1231px;width:2546px;height:1.5px;background:#27292c;border-radius:0px;"></div>
<div style="position:absolute;left:573px;top:1313px;width:2546px;height:1.5px;background:#27292c;border-radius:0px;"></div>
<div style="position:absolute;left:573px;top:1395px;width:2546px;height:1.5px;background:#27292c;border-radius:0px;"></div>
<div style="position:absolute;left:573px;top:1477px;width:2546px;height:1.5px;background:#27292c;border-radius:0px;"></div>
<div style="position:absolute;left:573px;top:1559px;width:2546px;height:1.5px;background:#27292c;border-radius:0px;"></div>
<div style="position:absolute;left:814px;top:1057px;width:2px;height:647px;background:#6a6a6a;border-radius:0px;"></div>
<div style="position:absolute;left:1013.5px;top:1057px;width:1.5px;height:502px;background:#2a2c2f;border-radius:0px;"></div>
<div style="position:absolute;left:1213.5px;top:1057px;width:1.5px;height:502px;background:#2a2c2f;border-radius:0px;"></div>
<div style="position:absolute;left:1414.5px;top:1057px;width:1.5px;height:502px;background:#2a2c2f;border-radius:0px;"></div>
<div style="position:absolute;left:1614.5px;top:1057px;width:1.5px;height:502px;background:#2a2c2f;border-radius:0px;"></div>
<div style="position:absolute;left:1814.5px;top:1057px;width:1.5px;height:502px;background:#2a2c2f;border-radius:0px;"></div>
<div style="position:absolute;left:2014.5px;top:1057px;width:1.5px;height:502px;background:#2a2c2f;border-radius:0px;"></div>
<div style="position:absolute;left:2254.5px;top:1057px;width:1.5px;height:502px;background:#2a2c2f;border-radius:0px;"></div>
<div style="position:absolute;left:2454.5px;top:1057px;width:1.5px;height:502px;background:#2a2c2f;border-radius:0px;"></div>
<div style="position:absolute;left:2674.5px;top:1057px;width:1.5px;height:502px;background:#2a2c2f;border-radius:0px;"></div>
<div style="position:absolute;left:2834.5px;top:1057px;width:1.5px;height:502px;background:#2a2c2f;border-radius:0px;"></div>
<div style="position:absolute;left:2994.5px;top:1057px;width:1.5px;height:502px;background:#2a2c2f;border-radius:0px;"></div>
<div class="t" style="left:595.00px;top:1088.6px;font-size:29.07px;line-height:29.07px;text-align:left;color:#e6e6e6;font-weight:400;"><span id="hd0" style="letter-spacing:0.43px;margin-right:-0.43px;">Trade Date</span></div>
<div style="position:absolute;left:764.2px;top:1092.6px;width:31.0px;height:3.400000000000091px;background:#90caf9;border-radius:0px;"></div>
<div style="position:absolute;left:764.2px;top:1100.3px;width:31.0px;height:3.400000000000091px;background:#90caf9;border-radius:0px;"></div>
<div style="position:absolute;left:764.2px;top:1108px;width:31.0px;height:3.400000000000091px;background:#90caf9;border-radius:0px;"></div>
<div class="t" style="left:836.00px;top:1088.6px;font-size:29.07px;line-height:29.07px;text-align:left;color:#e6e6e6;font-weight:400;"><span id="hd1" style="letter-spacing:0.91px;margin-right:-0.91px;">Symbol</span></div>
<div style="position:absolute;left:965.5px;top:1092.6px;width:31.0px;height:3.400000000000091px;background:#90caf9;border-radius:0px;"></div>
<div style="position:absolute;left:965.5px;top:1100.3px;width:31.0px;height:3.400000000000091px;background:#90caf9;border-radius:0px;"></div>
<div style="position:absolute;left:965.5px;top:1108px;width:31.0px;height:3.400000000000091px;background:#90caf9;border-radius:0px;"></div>
<div class="t" style="left:1036.00px;top:1088.6px;font-size:29.07px;line-height:29.07px;text-align:left;color:#e6e6e6;font-weight:400;"><span id="hd2" style="">Trade Op&#8230;</span></div>
<div style="position:absolute;left:1165.5px;top:1092.6px;width:31.0px;height:3.400000000000091px;background:#90caf9;border-radius:0px;"></div>
<div style="position:absolute;left:1165.5px;top:1100.3px;width:31.0px;height:3.400000000000091px;background:#90caf9;border-radius:0px;"></div>
<div style="position:absolute;left:1165.5px;top:1108px;width:31.0px;height:3.400000000000091px;background:#90caf9;border-radius:0px;"></div>
<div class="t" style="left:1234.00px;top:1088.6px;font-size:29.07px;line-height:29.07px;text-align:left;color:#e6e6e6;font-weight:400;"><span id="hd3" style="letter-spacing:0.99px;margin-right:-0.99px;">Price</span></div>
<div style="position:absolute;left:1366.5px;top:1092.6px;width:31.0px;height:3.400000000000091px;background:#90caf9;border-radius:0px;"></div>
<div style="position:absolute;left:1366.5px;top:1100.3px;width:31.0px;height:3.400000000000091px;background:#90caf9;border-radius:0px;"></div>
<div style="position:absolute;left:1366.5px;top:1108px;width:31.0px;height:3.400000000000091px;background:#90caf9;border-radius:0px;"></div>
<div class="t" style="left:1437.00px;top:1088.6px;font-size:29.07px;line-height:29.07px;text-align:left;color:#e6e6e6;font-weight:400;"><span id="hd4" style="letter-spacing:0.58px;margin-right:-0.58px;">Amount</span></div>
<div style="position:absolute;left:1566.5px;top:1092.6px;width:31.0px;height:3.400000000000091px;background:#90caf9;border-radius:0px;"></div>
<div style="position:absolute;left:1566.5px;top:1100.3px;width:31.0px;height:3.400000000000091px;background:#90caf9;border-radius:0px;"></div>
<div style="position:absolute;left:1566.5px;top:1108px;width:31.0px;height:3.400000000000091px;background:#90caf9;border-radius:0px;"></div>
<div class="t" style="left:1635.00px;top:1088.6px;font-size:29.07px;line-height:29.07px;text-align:left;color:#e6e6e6;font-weight:400;"><span id="hd5" style="">Now Avg &#8230;</span></div>
<div style="position:absolute;left:1766.5px;top:1092.6px;width:31.0px;height:3.400000000000091px;background:#90caf9;border-radius:0px;"></div>
<div style="position:absolute;left:1766.5px;top:1100.3px;width:31.0px;height:3.400000000000091px;background:#90caf9;border-radius:0px;"></div>
<div style="position:absolute;left:1766.5px;top:1108px;width:31.0px;height:3.400000000000091px;background:#90caf9;border-radius:0px;"></div>
<div class="t" style="left:1835.00px;top:1088.6px;font-size:29.07px;line-height:29.07px;text-align:left;color:#e6e6e6;font-weight:400;"><span id="hd6" style="letter-spacing:0.65px;margin-right:-0.65px;">Dil. Avg</span></div>
<div style="position:absolute;left:1966.5px;top:1092.6px;width:31.0px;height:3.400000000000091px;background:#90caf9;border-radius:0px;"></div>
<div style="position:absolute;left:1966.5px;top:1100.3px;width:31.0px;height:3.400000000000091px;background:#90caf9;border-radius:0px;"></div>
<div style="position:absolute;left:1966.5px;top:1108px;width:31.0px;height:3.400000000000091px;background:#90caf9;border-radius:0px;"></div>
<div class="t" style="left:2036.00px;top:1088.6px;font-size:29.07px;line-height:29.07px;text-align:left;color:#e6e6e6;font-weight:400;"><span id="hd7" style="letter-spacing:1.03px;margin-right:-1.03px;">Status</span></div>
<div style="position:absolute;left:2206.5px;top:1092.6px;width:31.0px;height:3.400000000000091px;background:#90caf9;border-radius:0px;"></div>
<div style="position:absolute;left:2206.5px;top:1100.3px;width:31.0px;height:3.400000000000091px;background:#90caf9;border-radius:0px;"></div>
<div style="position:absolute;left:2206.5px;top:1108px;width:31.0px;height:3.400000000000091px;background:#90caf9;border-radius:0px;"></div>
<div class="t" style="left:2275.00px;top:1088.6px;font-size:29.07px;line-height:29.07px;text-align:left;color:#e6e6e6;font-weight:400;"><span id="hd8" style="letter-spacing:-0.73px;margin-right:0.73px;">P/L</span></div>
<div style="position:absolute;left:2406.5px;top:1092.6px;width:31.0px;height:3.400000000000091px;background:#90caf9;border-radius:0px;"></div>
<div style="position:absolute;left:2406.5px;top:1100.3px;width:31.0px;height:3.400000000000091px;background:#90caf9;border-radius:0px;"></div>
<div style="position:absolute;left:2406.5px;top:1108px;width:31.0px;height:3.400000000000091px;background:#90caf9;border-radius:0px;"></div>
<div class="t" style="left:2475.00px;top:1088.6px;font-size:29.07px;line-height:29.07px;text-align:left;color:#e6e6e6;font-weight:400;"><span id="hd9" style="letter-spacing:-0.17px;margin-right:0.17px;">P/L %</span></div>
<div style="position:absolute;left:2626.5px;top:1092.6px;width:31.0px;height:3.400000000000091px;background:#90caf9;border-radius:0px;"></div>
<div style="position:absolute;left:2626.5px;top:1100.3px;width:31.0px;height:3.400000000000091px;background:#90caf9;border-radius:0px;"></div>
<div style="position:absolute;left:2626.5px;top:1108px;width:31.0px;height:3.400000000000091px;background:#90caf9;border-radius:0px;"></div>
<div class="t" style="left:2695.00px;top:1088.6px;font-size:29.07px;line-height:29.07px;text-align:left;color:#e6e6e6;font-weight:400;"><span id="hd10" style="letter-spacing:-0.03px;margin-right:0.03px;">Fees</span></div>
<div style="position:absolute;left:2786.5px;top:1092.6px;width:31.0px;height:3.400000000000091px;background:#90caf9;border-radius:0px;"></div>
<div style="position:absolute;left:2786.5px;top:1100.3px;width:31.0px;height:3.400000000000091px;background:#90caf9;border-radius:0px;"></div>
<div style="position:absolute;left:2786.5px;top:1108px;width:31.0px;height:3.400000000000091px;background:#90caf9;border-radius:0px;"></div>
<div class="t" style="left:2855.00px;top:1088.6px;font-size:29.07px;line-height:29.07px;text-align:left;color:#e6e6e6;font-weight:400;"><span id="hd11" style="">Divide&#8230;</span></div>
<div style="position:absolute;left:2946.5px;top:1092.6px;width:31.0px;height:3.400000000000091px;background:#90caf9;border-radius:0px;"></div>
<div style="position:absolute;left:2946.5px;top:1100.3px;width:31.0px;height:3.400000000000091px;background:#90caf9;border-radius:0px;"></div>
<div style="position:absolute;left:2946.5px;top:1108px;width:31.0px;height:3.400000000000091px;background:#90caf9;border-radius:0px;"></div>
<div class="t" style="left:3015.00px;top:1088.6px;font-size:29.07px;line-height:29.07px;text-align:left;color:#e6e6e6;font-weight:400;"><span id="hd12" style="letter-spacing:0.16px;margin-right:-0.16px;">Remark</span></div>
<div class="t" style="left:594.00px;top:1177.1px;font-size:26.16px;line-height:26.16px;text-align:left;color:#f0f0f0;font-weight:400;"><span id="r0c0" style="letter-spacing:0.97px;margin-right:-0.97px;">2025-09-16</span></div>
<div class="t" style="left:837.00px;top:1177.1px;font-size:26.16px;line-height:26.16px;text-align:left;color:#f0f0f0;font-weight:400;"><span id="r0c1" style="letter-spacing:-1.66px;margin-right:1.66px;">TSLA</span></div>
<div class="t" style="left:-383.26px;width:3000px;top:1175.5px;font-size:28.63px;line-height:28.63px;text-align:center;color:#ec9494;font-weight:700;"><span id="r0c2" style="letter-spacing:0.46px;margin-right:-0.46px;">Sell Long</span></div>
<div class="t" style="left:1237.00px;top:1177.1px;font-size:26.16px;line-height:26.16px;text-align:left;color:#f0f0f0;font-weight:400;"><span id="r0c3" style="letter-spacing:0.45px;margin-right:-0.45px;">420</span></div>
<div class="t" style="left:1436.00px;top:1177.1px;font-size:26.16px;line-height:26.16px;text-align:left;color:#f0f0f0;font-weight:400;"><span id="r0c4" style="">2</span></div>
<div class="t" style="left:1636.00px;top:1177.1px;font-size:26.16px;line-height:26.16px;text-align:left;color:#f0f0f0;font-weight:400;"><span id="r0c5" style="letter-spacing:0.95px;margin-right:-0.95px;">347</span></div>
<div class="t" style="left:1836.00px;top:1177.1px;font-size:26.16px;line-height:26.16px;text-align:left;color:#f0f0f0;font-weight:400;"><span id="r0c6" style="letter-spacing:0.23px;margin-right:-0.23px;">328.75</span></div>
<div class="t" style="left:635.77px;width:3000px;top:1175.5px;font-size:28.63px;line-height:28.63px;text-align:center;color:#22b59c;font-weight:700;"><span id="r0c7" style="letter-spacing:0.87px;margin-right:-0.87px;">Take Profit</span></div>
<div class="t" style="left:-564.08px;width:3000px;top:1175.5px;font-size:28.63px;line-height:28.63px;text-align:right;color:#22b59c;font-weight:700;"><span id="r0c8" style="letter-spacing:3.08px;margin-right:-3.08px;">146</span></div>
<div class="t" style="left:-345.55px;width:3000px;top:1175.5px;font-size:28.63px;line-height:28.63px;text-align:right;color:#22b59c;font-weight:700;"><span id="r0c9" style="letter-spacing:2.07px;margin-right:-2.07px;">21.0%</span></div>
<div class="t" style="left:2696.00px;top:1177.1px;font-size:26.16px;line-height:26.16px;text-align:left;color:#f0f0f0;font-weight:400;"><span id="r0c10" style="">0</span></div>
<div class="t" style="left:2856.00px;top:1177.1px;font-size:26.16px;line-height:26.16px;text-align:left;color:#f0f0f0;font-weight:400;"><span id="r0c11" style="">0</span></div>
<div class="t" style="left:594.00px;top:1259.2px;font-size:26.16px;line-height:26.16px;text-align:left;color:#f0f0f0;font-weight:400;"><span id="r1c0" style="letter-spacing:0.85px;margin-right:-0.85px;">2025-09-11</span></div>
<div class="t" style="left:836.00px;top:1259.2px;font-size:26.16px;line-height:26.16px;text-align:left;color:#f0f0f0;font-weight:400;"><span id="r1c1" style="letter-spacing:0.38px;margin-right:-0.38px;">oracle</span></div>
<div class="t" style="left:-383.76px;width:3000px;top:1257.6px;font-size:28.63px;line-height:28.63px;text-align:center;color:#22b59c;font-weight:700;"><span id="r1c2" style="letter-spacing:0.22px;margin-right:-0.22px;">Buy Long</span></div>
<div class="t" style="left:1236.00px;top:1259.2px;font-size:26.16px;line-height:26.16px;text-align:left;color:#f0f0f0;font-weight:400;"><span id="r1c3" style="letter-spacing:1.20px;margin-right:-1.20px;">328</span></div>
<div class="t" style="left:1436.00px;top:1259.2px;font-size:26.16px;line-height:26.16px;text-align:left;color:#f0f0f0;font-weight:400;"><span id="r1c4" style="">5</span></div>
<div class="t" style="left:1636.00px;top:1259.2px;font-size:26.16px;line-height:26.16px;text-align:left;color:#f0f0f0;font-weight:400;"><span id="r1c5" style="letter-spacing:1.20px;margin-right:-1.20px;">328</span></div>
<div class="t" style="left:1836.00px;top:1259.2px;font-size:26.16px;line-height:26.16px;text-align:left;color:#f0f0f0;font-weight:400;"><span id="r1c6" style="letter-spacing:1.20px;margin-right:-1.20px;">328</span></div>
<div class="t" style="left:636.24px;width:3000px;top:1257.6px;font-size:28.63px;line-height:28.63px;text-align:center;color:#2590f2;font-weight:700;"><span id="r1c7" style="letter-spacing:0.89px;margin-right:-0.89px;">New Position</span></div>
<div class="t" style="left:-564.08px;width:3000px;top:1257.6px;font-size:28.63px;line-height:28.63px;text-align:right;color:#9c9c9c;font-weight:700;"><span id="r1c8" style="">0</span></div>
<div class="t" style="left:-345.55px;width:3000px;top:1257.6px;font-size:28.63px;line-height:28.63px;text-align:right;color:#9c9c9c;font-weight:700;"><span id="r1c9" style="letter-spacing:3.07px;margin-right:-3.07px;">0.0%</span></div>
<div class="t" style="left:2696.00px;top:1259.2px;font-size:26.16px;line-height:26.16px;text-align:left;color:#f0f0f0;font-weight:400;"><span id="r1c10" style="">0</span></div>
<div class="t" style="left:2856.00px;top:1259.2px;font-size:26.16px;line-height:26.16px;text-align:left;color:#f0f0f0;font-weight:400;"><span id="r1c11" style="">0</span></div>
<div class="t" style="left:594.00px;top:1341.3px;font-size:26.16px;line-height:26.16px;text-align:left;color:#f0f0f0;font-weight:400;"><span id="r2c0" style="letter-spacing:0.97px;margin-right:-0.97px;">2025-09-10</span></div>
<div class="t" style="left:837.00px;top:1341.3px;font-size:26.16px;line-height:26.16px;text-align:left;color:#f0f0f0;font-weight:400;"><span id="r2c1" style="letter-spacing:-1.68px;margin-right:1.68px;">AAPL</span></div>
<div class="t" style="left:-383.76px;width:3000px;top:1339.7px;font-size:28.63px;line-height:28.63px;text-align:center;color:#22b59c;font-weight:700;"><span id="r2c2" style="letter-spacing:0.22px;margin-right:-0.22px;">Buy Long</span></div>
<div class="t" style="left:1236.00px;top:1341.3px;font-size:26.16px;line-height:26.16px;text-align:left;color:#f0f0f0;font-weight:400;"><span id="r2c3" style="letter-spacing:0.95px;margin-right:-0.95px;">235</span></div>
<div class="t" style="left:1435.00px;top:1341.3px;font-size:26.16px;line-height:26.16px;text-align:left;color:#f0f0f0;font-weight:400;"><span id="r2c4" style="letter-spacing:-1.55px;margin-right:1.55px;">10</span></div>
<div class="t" style="left:1636.00px;top:1341.3px;font-size:26.16px;line-height:26.16px;text-align:left;color:#f0f0f0;font-weight:400;"><span id="r2c5" style="letter-spacing:0.95px;margin-right:-0.95px;">235</span></div>
<div class="t" style="left:1836.00px;top:1341.3px;font-size:26.16px;line-height:26.16px;text-align:left;color:#f0f0f0;font-weight:400;"><span id="r2c6" style="letter-spacing:0.95px;margin-right:-0.95px;">235</span></div>
<div class="t" style="left:636.24px;width:3000px;top:1339.7px;font-size:28.63px;line-height:28.63px;text-align:center;color:#2590f2;font-weight:700;"><span id="r2c7" style="letter-spacing:0.89px;margin-right:-0.89px;">New Position</span></div>
<div class="t" style="left:-564.08px;width:3000px;top:1339.7px;font-size:28.63px;line-height:28.63px;text-align:right;color:#9c9c9c;font-weight:700;"><span id="r2c8" style="">0</span></div>
<div class="t" style="left:-345.55px;width:3000px;top:1339.7px;font-size:28.63px;line-height:28.63px;text-align:right;color:#9c9c9c;font-weight:700;"><span id="r2c9" style="letter-spacing:3.07px;margin-right:-3.07px;">0.0%</span></div>
<div class="t" style="left:2696.00px;top:1341.3px;font-size:26.16px;line-height:26.16px;text-align:left;color:#f0f0f0;font-weight:400;"><span id="r2c10" style="">0</span></div>
<div class="t" style="left:2856.00px;top:1341.3px;font-size:26.16px;line-height:26.16px;text-align:left;color:#f0f0f0;font-weight:400;"><span id="r2c11" style="">0</span></div>
<div class="t" style="left:594.00px;top:1423.4px;font-size:26.16px;line-height:26.16px;text-align:left;color:#f0f0f0;font-weight:400;"><span id="r3c0" style="letter-spacing:0.97px;margin-right:-0.97px;">2025-09-10</span></div>
<div class="t" style="left:837.00px;top:1423.4px;font-size:26.16px;line-height:26.16px;text-align:left;color:#f0f0f0;font-weight:400;"><span id="r3c1" style="letter-spacing:-1.66px;margin-right:1.66px;">TSLA</span></div>
<div class="t" style="left:-383.76px;width:3000px;top:1421.8px;font-size:28.63px;line-height:28.63px;text-align:center;color:#22b59c;font-weight:700;"><span id="r3c2" style="letter-spacing:0.22px;margin-right:-0.22px;">Buy Long</span></div>
<div class="t" style="left:1236.00px;top:1423.4px;font-size:26.16px;line-height:26.16px;text-align:left;color:#f0f0f0;font-weight:400;"><span id="r3c3" style="letter-spacing:0.95px;margin-right:-0.95px;">347</span></div>
<div class="t" style="left:1435.00px;top:1423.4px;font-size:26.16px;line-height:26.16px;text-align:left;color:#f0f0f0;font-weight:400;"><span id="r3c4" style="letter-spacing:-1.55px;margin-right:1.55px;">10</span></div>
<div class="t" style="left:1636.00px;top:1423.4px;font-size:26.16px;line-height:26.16px;text-align:left;color:#f0f0f0;font-weight:400;"><span id="r3c5" style="letter-spacing:0.95px;margin-right:-0.95px;">347</span></div>
<div class="t" style="left:1836.00px;top:1423.4px;font-size:26.16px;line-height:26.16px;text-align:left;color:#f0f0f0;font-weight:400;"><span id="r3c6" style="letter-spacing:0.95px;margin-right:-0.95px;">347</span></div>
<div class="t" style="left:636.24px;width:3000px;top:1421.8px;font-size:28.63px;line-height:28.63px;text-align:center;color:#2590f2;font-weight:700;"><span id="r3c7" style="letter-spacing:0.89px;margin-right:-0.89px;">New Position</span></div>
<div class="t" style="left:-564.08px;width:3000px;top:1421.8px;font-size:28.63px;line-height:28.63px;text-align:right;color:#9c9c9c;font-weight:700;"><span id="r3c8" style="">0</span></div>
<div class="t" style="left:-345.55px;width:3000px;top:1421.8px;font-size:28.63px;line-height:28.63px;text-align:right;color:#9c9c9c;font-weight:700;"><span id="r3c9" style="letter-spacing:3.07px;margin-right:-3.07px;">0.0%</span></div>
<div class="t" style="left:2696.00px;top:1423.4px;font-size:26.16px;line-height:26.16px;text-align:left;color:#f0f0f0;font-weight:400;"><span id="r3c10" style="">0</span></div>
<div class="t" style="left:2856.00px;top:1423.4px;font-size:26.16px;line-height:26.16px;text-align:left;color:#f0f0f0;font-weight:400;"><span id="r3c11" style="">0</span></div>
<div class="t" style="left:594.00px;top:1505.5px;font-size:26.16px;line-height:26.16px;text-align:left;color:#f0f0f0;font-weight:400;"><span id="r4c0" style="letter-spacing:0.97px;margin-right:-0.97px;">2025-09-10</span></div>
<div class="t" style="left:837.00px;top:1505.5px;font-size:26.16px;line-height:26.16px;text-align:left;color:#f0f0f0;font-weight:400;"><span id="r4c1" style="letter-spacing:-1.32px;margin-right:1.32px;">AMD</span></div>
<div class="t" style="left:-383.76px;width:3000px;top:1503.9px;font-size:28.63px;line-height:28.63px;text-align:center;color:#22b59c;font-weight:700;"><span id="r4c2" style="letter-spacing:0.22px;margin-right:-0.22px;">Buy Long</span></div>
<div class="t" style="left:1235.00px;top:1505.5px;font-size:26.16px;line-height:26.16px;text-align:left;color:#f0f0f0;font-weight:400;"><span id="r4c3" style="letter-spacing:-0.30px;margin-right:0.30px;">155</span></div>
<div class="t" style="left:1435.00px;top:1505.5px;font-size:26.16px;line-height:26.16px;text-align:left;color:#f0f0f0;font-weight:400;"><span id="r4c4" style="letter-spacing:-1.55px;margin-right:1.55px;">10</span></div>
<div class="t" style="left:1635.00px;top:1505.5px;font-size:26.16px;line-height:26.16px;text-align:left;color:#f0f0f0;font-weight:400;"><span id="r4c5" style="letter-spacing:-0.30px;margin-right:0.30px;">155</span></div>
<div class="t" style="left:1835.00px;top:1505.5px;font-size:26.16px;line-height:26.16px;text-align:left;color:#f0f0f0;font-weight:400;"><span id="r4c6" style="letter-spacing:-0.30px;margin-right:0.30px;">155</span></div>
<div class="t" style="left:636.24px;width:3000px;top:1503.9px;font-size:28.63px;line-height:28.63px;text-align:center;color:#2590f2;font-weight:700;"><span id="r4c7" style="letter-spacing:0.89px;margin-right:-0.89px;">New Position</span></div>
<div class="t" style="left:-564.08px;width:3000px;top:1503.9px;font-size:28.63px;line-height:28.63px;text-align:right;color:#9c9c9c;font-weight:700;"><span id="r4c8" style="">0</span></div>
<div class="t" style="left:-345.55px;width:3000px;top:1503.9px;font-size:28.63px;line-height:28.63px;text-align:right;color:#9c9c9c;font-weight:700;"><span id="r4c9" style="letter-spacing:3.07px;margin-right:-3.07px;">0.0%</span></div>
<div class="t" style="left:2696.00px;top:1505.5px;font-size:26.16px;line-height:26.16px;text-align:left;color:#f0f0f0;font-weight:400;"><span id="r4c10" style="">0</span></div>
<div class="t" style="left:2856.00px;top:1505.5px;font-size:26.16px;line-height:26.16px;text-align:left;color:#f0f0f0;font-weight:400;"><span id="r4c11" style="">0</span></div>
</div></div>
</body></html>
